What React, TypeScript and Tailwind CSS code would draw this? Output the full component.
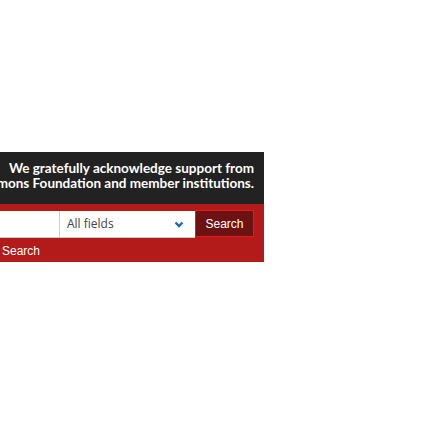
export default function App() {
  return (
    <div className="w-[448px] h-[448px] bg-white overflow-hidden">
      <div className="h-[152px]" />
      <div className="w-[264px]">
        <div className="h-[52px] bg-[#222222] overflow-hidden pt-[9px] pr-[10px] flex flex-col items-end text-white font-bold text-[13.5px] leading-[15px] [font-family:Lato,sans-serif]">
          <span className="whitespace-nowrap">We gratefully acknowledge support from</span>
          <span className="whitespace-nowrap">the Simons Foundation and member institutions.</span>
        </div>
        <div className="h-[58px] bg-[#b31b1b] pt-[6px]">
          <div className="flex items-start">
            <div className="mt-px w-[60px] h-[27px] bg-white border-r border-b border-[#cccccc]" />
            <div className="mt-px w-[135px] h-[27px] bg-white border-b border-[#cccccc] flex items-center justify-between pl-[7px] pr-[11px]">
              <span className="text-[12px] text-[#444444] [font-family:'Open_Sans',sans-serif]">All fields</span>
              <svg width="10" height="7" viewBox="0 0 10 7">
                <polyline points="1.5,1.5 5,5 8.5,1.5" fill="none" stroke="#1b6bb0" strokeWidth="2.4" />
              </svg>
            </div>
            <button className="w-[59px] h-[27px] bg-[#6d1212] border border-[#e5191c] text-white text-[12px] [font-family:'Liberation_Sans',Arial,sans-serif]">
              Search
            </button>
          </div>
          <div className="pl-[2px] pt-[4px] text-white text-[12px] [font-family:'Liberation_Sans',Arial,sans-serif]">
            Search
          </div>
        </div>
      </div>
    </div>
  );
}
